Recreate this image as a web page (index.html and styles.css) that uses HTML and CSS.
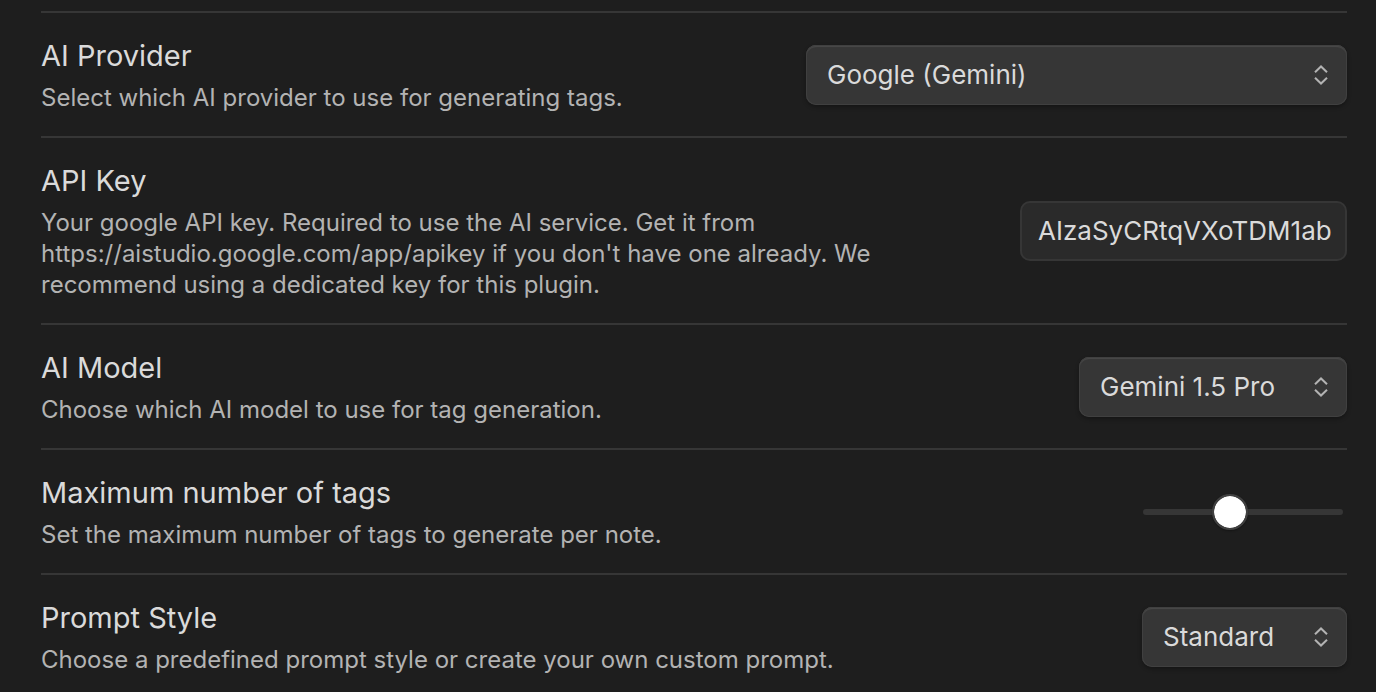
FILE: index.html
```html
<!DOCTYPE html>
<html lang="en">
<head>
<meta charset="utf-8">
<title>Settings</title>
<link rel="stylesheet" href="styles.css">
</head>
<body>
<main class="settings">
  <div class="setting">
    <div class="info">
      <label class="name" for="provider">AI Provider</label>
      <p class="desc">Select which AI provider to use for generating tags.</p>
    </div>
    <div class="dropdown dropdown-wide">
      <select id="provider"><option>Google (Gemini)</option></select>
      <svg class="chevrons" viewBox="0 0 16 20" aria-hidden="true"><path d="M2 7.3l6-5.8 6 5.8M2 12.7l6 5.8 6-5.8"/></svg>
    </div>
  </div>
  <div class="setting">
    <div class="info">
      <label class="name" for="key">API Key</label>
      <p class="desc">Your google API key. Required to use the AI service. Get it from https://aistudio.google.com/app/apikey if you don't have one already. We recommend using a dedicated key for this plugin.</p>
    </div>
    <input class="text" id="key" type="text" value="AIzaSyCRtqVXoTDM1ab">
  </div>
  <div class="setting">
    <div class="info">
      <label class="name" for="model">AI Model</label>
      <p class="desc">Choose which AI model to use for tag generation.</p>
    </div>
    <div class="dropdown">
      <select id="model"><option>Gemini 1.5 Pro</option></select>
      <svg class="chevrons" viewBox="0 0 16 20" aria-hidden="true"><path d="M2 7.3l6-5.8 6 5.8M2 12.7l6 5.8 6-5.8"/></svg>
    </div>
  </div>
  <div class="setting">
    <div class="info">
      <label class="name" for="count">Maximum number of tags</label>
      <p class="desc">Set the maximum number of tags to generate per note.</p>
    </div>
    <input class="slider" id="count" type="range" min="0" max="100" value="42">
  </div>
  <div class="setting">
    <div class="info">
      <label class="name" for="style">Prompt Style</label>
      <p class="desc">Choose a predefined prompt style or create your own custom prompt.</p>
    </div>
    <div class="dropdown">
      <select id="style"><option>Standard</option></select>
      <svg class="chevrons" viewBox="0 0 16 20" aria-hidden="true"><path d="M2 7.3l6-5.8 6 5.8M2 12.7l6 5.8 6-5.8"/></svg>
    </div>
  </div>
</main>
</body>
</html>
```
FILE: styles.css
```css
* { box-sizing: border-box; }
body {
  margin: 0;
  background: #1e1e1e;
  color: #dadada;
  font-family: Inter, "Noto Sans", sans-serif;
}
.settings { padding: 11px 29px 0 41px; }
.setting {
  display: flex;
  align-items: center;
  justify-content: space-between;
  gap: 32px;
  padding: 23px 0;
  border-top: 2px solid #363636;
}
.info { flex: 1; max-width: 832px; }
.name { display: block; font-size: 29px; line-height: 40px; }
.desc {
  margin: 6px 0 0;
  color: #b3b3b3;
  font-size: 24px;
  line-height: 31px;
}
.dropdown { position: relative; display: flex; }
.dropdown select {
  appearance: none;
  height: 60px;
  margin: 0;
  padding: 0 72px 0 21px;
  border: 0;
  border-radius: 10px;
  background: #363636;
  color: #dadada;
  font: 26px Inter, "Noto Sans", sans-serif;
  box-shadow: inset 0 0 0 1px #404040, inset 0 2px 1px #4a4a4a, 0 2px 4px #00000050;
}
.dropdown-wide { width: 541px; }
.dropdown-wide select { width: 100%; }
.chevrons {
  position: absolute;
  top: 20px;
  right: 18px;
  width: 16px;
  height: 20px;
  fill: none;
  stroke: #b3b3b3;
  stroke-width: 2;
  pointer-events: none;
}
.text {
  width: 327px;
  height: 60px;
  padding: 0 10px 0 16px;
  border: 2px solid #363636;
  border-radius: 10px;
  background: #2a2a2a;
  color: #dadada;
  font: 26px Inter, "Noto Sans", sans-serif;
}
.slider {
  appearance: none;
  width: 200px;
  height: 6px;
  margin: 0 4px;
  border-radius: 3px;
  background: #363636;
}
.slider::-webkit-slider-thumb {
  appearance: none;
  width: 36px;
  height: 36px;
  border: 2px solid #404040;
  border-radius: 50%;
  background: #fff;
  background-clip: padding-box;
  box-shadow: 0 1px 2px #00000050;
}
```
